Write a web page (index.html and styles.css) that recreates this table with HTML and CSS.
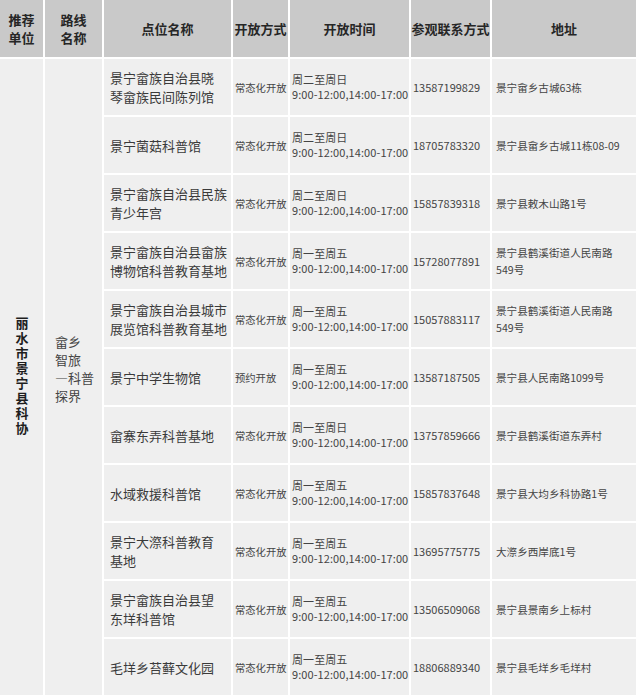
FILE: index.html
```html
<!DOCTYPE html>
<html lang="zh">
<head>
<meta charset="utf-8">
<title>科普探界路线</title>
<link rel="stylesheet" href="styles.css">
</head>
<body>
<div class="table">
  <div class="th">推荐<br>单位</div>
  <div class="th">路线<br>名称</div>
  <div class="th">点位名称</div>
  <div class="th">开放方式</div>
  <div class="th">开放时间</div>
  <div class="th">参观联系方式</div>
  <div class="th">地址</div>

  <div class="td unit"><span class="vert">丽水市景宁县科协</span></div>
  <div class="td route">畲乡<br>智旅<br>—科普<br>探界</div>

  <div class="td name">景宁畲族自治县晓<br>琴畲族民间陈列馆</div>
  <div class="td mode">常态化开放</div>
  <div class="td time">周二至周日<br>9:00-12:00,14:00-17:00</div>
  <div class="td phone">13587199829</div>
  <div class="td addr">景宁畲乡古城63栋</div>

  <div class="td name">景宁菌菇科普馆</div>
  <div class="td mode">常态化开放</div>
  <div class="td time">周二至周日<br>9:00-12:00,14:00-17:00</div>
  <div class="td phone">18705783320</div>
  <div class="td addr">景宁县畲乡古城11栋08-09</div>

  <div class="td name">景宁畲族自治县民族<br>青少年宫</div>
  <div class="td mode">常态化开放</div>
  <div class="td time">周二至周日<br>9:00-12:00,14:00-17:00</div>
  <div class="td phone">15857839318</div>
  <div class="td addr">景宁县敕木山路1号</div>

  <div class="td name">景宁畲族自治县畲族<br>博物馆科普教育基地</div>
  <div class="td mode">常态化开放</div>
  <div class="td time">周一至周五<br>9:00-12:00,14:00-17:00</div>
  <div class="td phone">15728077891</div>
  <div class="td addr">景宁县鹤溪街道人民南路<br>549号</div>

  <div class="td name">景宁畲族自治县城市<br>展览馆科普教育基地</div>
  <div class="td mode">常态化开放</div>
  <div class="td time">周一至周五<br>9:00-12:00,14:00-17:00</div>
  <div class="td phone">15057883117</div>
  <div class="td addr">景宁县鹤溪街道人民南路<br>549号</div>

  <div class="td name">景宁中学生物馆</div>
  <div class="td mode">预约开放</div>
  <div class="td time">周一至周五<br>9:00-12:00,14:00-17:00</div>
  <div class="td phone">13587187505</div>
  <div class="td addr">景宁县人民南路1099号</div>

  <div class="td name">畲寨东弄科普基地</div>
  <div class="td mode">常态化开放</div>
  <div class="td time">周一至周日<br>9:00-12:00,14:00-17:00</div>
  <div class="td phone">13757859666</div>
  <div class="td addr">景宁县鹤溪街道东弄村</div>

  <div class="td name">水域救援科普馆</div>
  <div class="td mode">常态化开放</div>
  <div class="td time">周一至周五<br>9:00-12:00,14:00-17:00</div>
  <div class="td phone">15857837648</div>
  <div class="td addr">景宁县大均乡科协路1号</div>

  <div class="td name">景宁大漈科普教育<br>基地</div>
  <div class="td mode">常态化开放</div>
  <div class="td time">周一至周五<br>9:00-12:00,14:00-17:00</div>
  <div class="td phone">13695775775</div>
  <div class="td addr">大漈乡西岸底1号</div>

  <div class="td name">景宁畲族自治县望<br>东垟科普馆</div>
  <div class="td mode">常态化开放</div>
  <div class="td time">周一至周五<br>9:00-12:00,14:00-17:00</div>
  <div class="td phone">13506509068</div>
  <div class="td addr">景宁县景南乡上标村</div>

  <div class="td name">毛垟乡苔藓文化园</div>
  <div class="td mode">常态化开放</div>
  <div class="td time">周一至周五<br>9:00-12:00,14:00-17:00</div>
  <div class="td phone">18806889340</div>
  <div class="td addr">景宁县毛垟乡毛垟村</div>
</div>
</body>
</html>
```

FILE: styles.css
```css
html, body {
  margin: 0;
  padding: 0;
  background: #ffffff;
}

body {
  font-family: "Noto Sans CJK SC", "Noto Sans", sans-serif;
  color: #3a3a3a;
}

.table {
  display: grid;
  width: 636px;
  grid-template-columns: 43px 57px 127px 55px 119px 79px 144px;
  grid-template-rows: 57px repeat(11, 56px);
  gap: 2px;
  background: #ffffff;
}

.th {
  background: #c9c9c9;
  color: #262626;
  font-weight: 700;
  font-size: 13px;
  line-height: 18px;
  display: flex;
  align-items: center;
  justify-content: center;
  text-align: center;
  white-space: nowrap;
}

.td {
  background: #efefef;
  display: flex;
  align-items: center;
  white-space: nowrap;
}

.unit {
  grid-column: 1;
  grid-row: 2 / span 11;
  justify-content: center;
  font-weight: 700;
  font-size: 13px;
  color: #1e1e1e;
}

.vert {
  writing-mode: vertical-rl;
  text-orientation: upright;
  letter-spacing: 2px;
  line-height: 16px;
}

.route {
  grid-column: 2;
  grid-row: 2 / span 11;
  padding-left: 10px;
  padding-bottom: 16px;
  font-size: 13px;
  line-height: 18px;
  color: #444;
}

.name {
  padding-left: 6px;
  font-size: 13px;
  line-height: 19px;
  color: #3a3a3a;
}

.mode {
  padding-left: 2px;
  font-size: 10.3px;
  color: #444;
}

.time {
  padding-left: 2px;
  font-size: 11px;
  line-height: 15px;
  letter-spacing: 0.08px;
  color: #444;
}

.phone {
  padding-left: 2px;
  font-size: 11px;
  color: #444;
}

.addr {
  padding-left: 4px;
  font-size: 10.6px;
  line-height: 17px;
  color: #444;
}
```
